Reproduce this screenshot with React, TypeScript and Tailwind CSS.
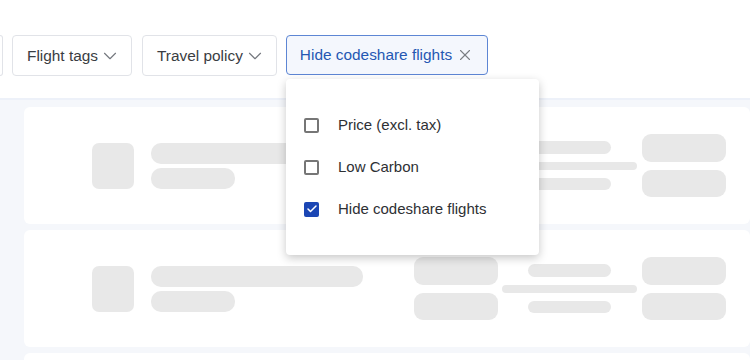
import { ChevronDown, X, Check } from 'lucide-react';

function FilterButton({ label }: { label: string }) {
  return (
    <button
      type="button"
      className="h-[41px] flex items-center gap-[1px] pl-[14px] pr-[10px] rounded border border-[#e1e3e8] bg-white text-[15.4px] text-[#3a3d42] shrink-0"
    >
      {label}
      <ChevronDown className="w-[22px] h-[22px] text-[#74787e]" strokeWidth={1.25} />
    </button>
  );
}

function Bar({ className }: { className: string }) {
  return <div className={`bg-[#e8e8e8] ${className}`} />;
}

function SkeletonCard() {
  return (
    <div className="h-[117px] bg-white rounded-md flex items-center pl-[68px]">
      <Bar className="w-[42px] h-[46px] rounded-[7px]" />
      <div className="ml-[17px] flex flex-col gap-[4px] w-[212px]">
        <Bar className="h-[21px] w-[212px] rounded-[10px]" />
        <Bar className="h-[21px] w-[84px] rounded-[10px]" />
      </div>
      <div className="ml-[51px] flex flex-col gap-[8px]">
        <Bar className="w-[84px] h-[28px] rounded-[9px]" />
        <Bar className="w-[84px] h-[27px] rounded-[9px]" />
      </div>
      <div className="ml-[4px] w-[135px] flex flex-col items-center gap-[8px]">
        <Bar className="w-[83px] h-[13px] rounded-full" />
        <Bar className="w-[135px] h-[8px] rounded-full" />
        <Bar className="w-[83px] h-[12px] rounded-full" />
      </div>
      <div className="ml-[5px] flex flex-col gap-[8px]">
        <Bar className="w-[84px] h-[28px] rounded-[9px]" />
        <Bar className="w-[84px] h-[27px] rounded-[9px]" />
      </div>
    </div>
  );
}

function Option({ label, checked }: { label: string; checked?: boolean }) {
  return (
    <div className="h-[42px] flex items-center pl-[18px]">
      {checked ? (
        <span className="w-[15px] h-[15px] rounded-[2px] bg-[#1b46b4] flex items-center justify-center">
          <Check className="w-[12px] h-[12px] text-white" strokeWidth={3} />
        </span>
      ) : (
        <span className="w-[15px] h-[15px] rounded-[2px] border-2 border-[#767676] box-border" />
      )}
      <span className="ml-[19px] text-[15px] text-[#2e3034]">{label}</span>
    </div>
  );
}

export default function App() {
  return (
    <div
      className="w-[750px] h-[360px] overflow-hidden bg-[#f5f7fb] relative"
      style={{ fontFamily: '"Liberation Sans", Arial, sans-serif' }}
    >
      <div className="h-[100px] bg-white border-b-2 border-[#edf1f9] flex items-start pt-[35px]">
        <div className="w-[3px] h-[41px] border border-l-0 border-[#e1e3e8] rounded-r bg-white shrink-0" />
        <div className="ml-[9px] flex items-start gap-[10px]">
          <FilterButton label="Flight tags" />
          <FilterButton label="Travel policy" />
        </div>
        <button
          type="button"
          className="ml-[9px] h-[40px] flex items-center gap-[4px] pl-[13px] pr-[13px] rounded border border-[#5d86d4] bg-[#f4f7fd] text-[15.4px] text-[#2457b3] shrink-0"
        >
          Hide codeshare flights
          <X className="w-[18px] h-[18px] text-[#7a7e84]" strokeWidth={1.5} />
        </button>
      </div>
      <div className="pl-[24px] pt-[7px] flex flex-col gap-[6px]">
        <SkeletonCard />
        <SkeletonCard />
        <div className="h-[40px] bg-white rounded-md" />
      </div>

      <div className="absolute left-[286px] top-[79px] w-[253px] h-[176px] bg-white rounded shadow-[0_3px_10px_rgba(0,0,0,0.22)] py-[25px]">
        <Option label="Price (excl. tax)" />
        <Option label="Low Carbon" />
        <Option label="Hide codeshare flights" checked />
      </div>
    </div>
  );
}
